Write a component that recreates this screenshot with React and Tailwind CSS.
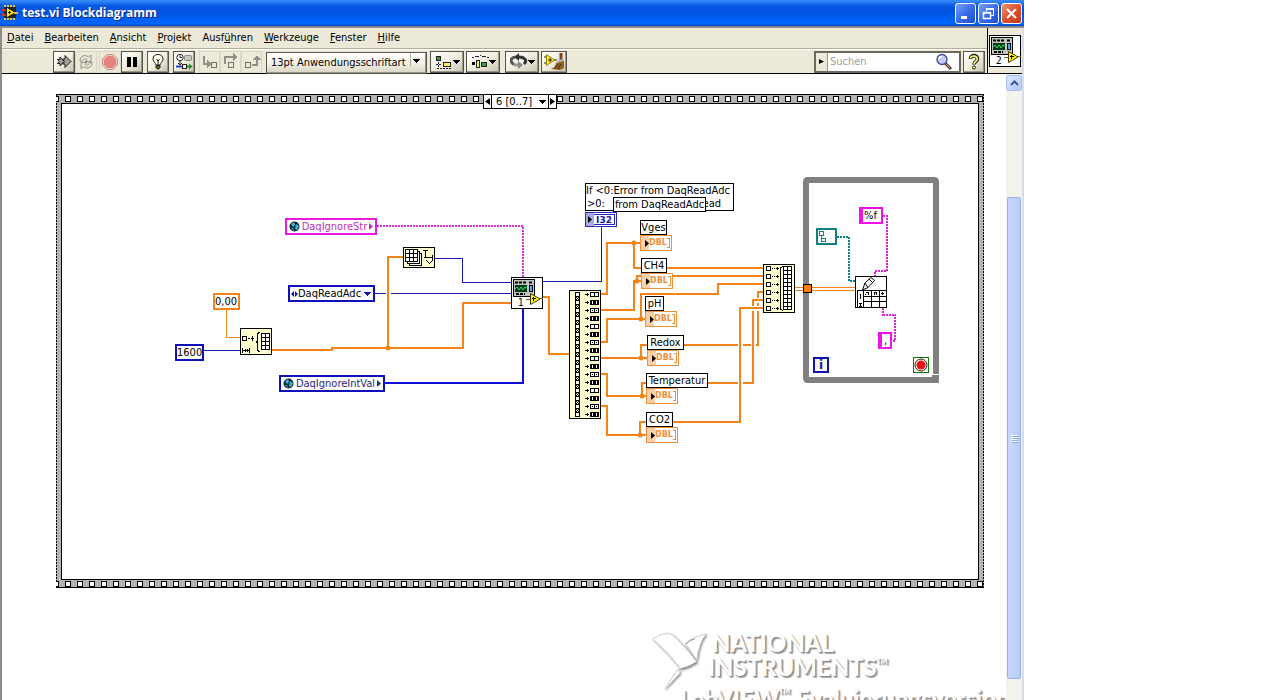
import { useState } from "react";
import { clsx } from "clsx";

const MENUS = [
  ["", "D", "atei"],
  ["", "B", "earbeiten"],
  ["", "A", "nsicht"],
  ["", "P", "rojekt"],
  ["Ausf", "ü", "hren"],
  ["", "W", "erkzeuge"],
  ["", "F", "enster"],
  ["", "H", "ilfe"],
];

// Wires of the channel outputs. Later ones bridge over earlier ones.
const CHANNEL_WIRES = [
  "M601 294H607V243H640M634 243V268H763",
  "M601 310H634V281H641M637 281V276H763",
  "M601 342H607V319H645M641 319V294H718V284H763",
  "M601 358H647M641 358V345H758V292H763",
  "M601 374H607V396H646M642 396V383H753V300H763",
  "M601 406H607V435H646M640 435V422H740V308H763",
];

const JUNCTIONS = [
  [388, 348],
  [634, 243],
  [637, 281],
  [641, 319],
  [641, 358],
  [642, 396],
  [640, 435],
];

const CHANNELS = [
  { name: "Vges", label: "left-[638px] top-[146px] w-[27px]", terminal: "left-[638px] top-[161px]" },
  { name: "CH4", label: "left-[639px] top-[184px] w-[26px]", terminal: "left-[639px] top-[199px]" },
  { name: "pH", label: "left-[643px] top-[222px] w-[19px]", terminal: "left-[643px] top-[237px]" },
  { name: "Redox", label: "left-[645px] top-[261px] w-[37px]", terminal: "left-[645px] top-[276px]" },
  { name: "Temperatur", label: "left-[644px] top-[299px] w-[62px]", terminal: "left-[644px] top-[314px]" },
  { name: "CO2", label: "left-[644px] top-[338px] w-[27px]", terminal: "left-[644px] top-[353px]" },
];

function Arrow({ className }) {
  return (
    <svg className={clsx("pointer-events-none shrink-0", className)} width="7" height="4" viewBox="0 0 7 4" shapeRendering="crispEdges">
      <path d="M0 0H7L3.5 4Z" fill="currentColor" />
    </svg>
  );
}

/* Title bar */

function AppIcon() {
  return (
    <svg width="16" height="16" viewBox="0 0 16 16">
      <path d="M2 1H14M2 14H14" stroke="#e8c840" strokeWidth="2" strokeDasharray="2 1" />
      <rect x="2" y="2" width="12" height="11" fill="#222" />
      <path d="M0 5H4M0 10H4" stroke="#e03030" strokeWidth="2" />
      <path d="M12 8H16" stroke="#e8b020" strokeWidth="2" />
      <path d="M5 3V12L12.500 7.500Z" fill="#ffe820" />
      <path d="M6 7.500H9M7.500 6V9" stroke="#222" />
    </svg>
  );
}

function WindowButton({ label, red, children }) {
  return (
    <button
      type="button"
      aria-label={label}
      className={clsx(
        "flex h-[21px] w-[21px] items-center justify-center rounded-[3px] border border-white bg-gradient-to-br",
        red ? "from-[#f0906c] via-[#e0502c] to-[#c03c14]" : "from-[#7aa0f4] via-[#3a6cec] to-[#1c4cd4]"
      )}
    >
      <svg width="15" height="15" viewBox="0 0 15 15" fill="none" stroke="white">
        {children}
      </svg>
    </button>
  );
}

function TitleBar() {
  return (
    <header className="flex h-7 shrink-0 items-center gap-1 border-b-2 border-[#8c8c88] bg-[linear-gradient(180deg,#3a8cf8_0%,#2a80f4_8%,#0858e4_22%,#0054e0_50%,#0062fa_78%,#0066ff_92%,#0040c0_100%)] px-[2px]">
      <AppIcon />
      <h1 className="flex-1 font-['Open_Sans',sans-serif] text-[12px] font-bold text-white [text-shadow:1px_1px_0_#0a2a80]">
        test.vi Blockdiagramm
      </h1>
      <div className="flex gap-[2px]">
        <WindowButton label="Minimieren">
          <path d="M3 11.500H9" strokeWidth="3" />
        </WindowButton>
        <WindowButton label="Wiederherstellen">
          <path d="M5.500 5V3H12.500V9.500H10" strokeWidth="1" />
          <path d="M5 3H13" strokeWidth="2" />
          <path d="M2.500 6.500H9.500V12.500H2.500ZM2 7H10" strokeWidth="1.500" />
        </WindowButton>
        <WindowButton label="Schließen" red>
          <path d="M3 3L12 12M12 3L3 12" strokeWidth="2.200" />
        </WindowButton>
      </div>
    </header>
  );
}

/* Menu bar and toolbar */

function ToolButton({ label, flat, width = "w-[22px]", children }) {
  return (
    <button
      type="button"
      aria-label={label}
      className={clsx(
        "flex h-[22px] items-center justify-center border",
        width,
        flat
          ? "border-[#cfccbd] bg-[#ece9d8] opacity-60"
          : "border-[#55554c] bg-gradient-to-br from-white via-[#f0eee0] to-[#c8c4b0] shadow-[inset_-1px_-1px_0_#98958a]"
      )}
    >
      {children}
    </button>
  );
}

function Icon({ children }) {
  return (
    <svg width="18" height="18" viewBox="0 0 18 18" fill="none" stroke="#222" shapeRendering="crispEdges">
      {children}
    </svg>
  );
}

function Toolbar() {
  const [font, setFont] = useState("13pt Anwendungsschriftart");
  const [query, setQuery] = useState("");

  return (
    <div className="flex h-6 items-center border-t border-[#fffef6] pr-[2px] pl-[51px]">
      <div className="flex">
        <ToolButton label="Ausführen">
          <svg width="18" height="18" viewBox="0 0 18 18" fill="#a0a098" stroke="#222">
            <path d="M2.500 6.500H5V4L9 8.500L5 13V10.500H2.500L4 8.500Z" />
            <path d="M7.500 6H10V2.500L16 8.500L10 14.500V11H7.500L9.500 8.500Z" />
          </svg>
        </ToolButton>
        <ToolButton label="Wiederholt ausführen" flat>
          <svg width="18" height="18" viewBox="0 0 18 18" fill="#ece9d8" stroke="#555">
            <path d="M3 8C3 3 8 1 11.500 4L14 2V8.500H8L10 6.500C8 5 6 6 5.500 8Z" />
            <path d="M15 9.500C15 14.500 10 16.500 6.500 13.500L4 15.500V9.500H10L8 11.500C10 13 12 12 12.500 9.500Z" />
          </svg>
        </ToolButton>
      </div>
      <div className="ml-[2px] flex">
        <ToolButton label="Abbrechen" flat>
          <svg width="18" height="18" viewBox="0 0 18 18">
            <path d="M6 1.500H12L16.500 6V12L12 16.500H6L1.500 12V6Z" fill="#f0c0b8" stroke="#a05048" />
            <path d="M6.500 3H11.500L15 6.500V11.500L11.500 15H6.500L3 11.500V6.500Z" fill="#e04040" />
          </svg>
        </ToolButton>
        <ToolButton label="Pause">
          <Icon>
            <path d="M6 4V14M12 4V14" strokeWidth="4" stroke="black" />
          </Icon>
        </ToolButton>
      </div>
      <div className="ml-1 flex gap-1">
        <ToolButton label="Highlight-Funktion">
          <svg width="18" height="18" viewBox="0 0 18 18" fill="#fffff0" stroke="#222">
            <path d="M7 12C7 10 4 9 4 6C4 3 6 1.500 9 1.500S14 3 14 6C14 9 11 10 11 12Z" />
            <path d="M7.500 6L9 8L10.500 6M9 8V12" />
            <path d="M7 12.500H11V15H10L9 16.500L8 15H7Z" fill="#806010" />
          </svg>
        </ToolButton>
        <ToolButton label="Verbindungswerte speichern">
          <svg width="18" height="18" viewBox="0 0 18 18" fill="none" stroke="#222">
            <circle cx="5" cy="4.500" r="3.200" fill="white" />
            <path d="M5 2.500V4.500H7M5 8V12M3 10L5 12L7 10" />
            <rect x="9.500" y="2.500" width="7" height="5" rx="1" fill="#c8c8c0" stroke="#888" />
            <path d="M1 13.500H7" stroke="#2040c0" strokeWidth="2" />
            <rect x="7.500" y="11.500" width="4" height="4" fill="white" />
            <path d="M12 13.500H14" stroke="#209020" strokeWidth="2" />
            <path d="M14 10.500V16.500L17.500 13.500Z" fill="#209020" stroke="none" />
          </svg>
        </ToolButton>
      </div>
      <div className="ml-1 flex">
        <ToolButton label="Hineinspringen" flat width="w-[21px]">
          <Icon>
            <path d="M3 3V11H8" strokeWidth="2" stroke="#555" />
            <path d="M6 7V15L10 11Z" fill="#555" stroke="none" />
            <rect x="10.500" y="9.500" width="5" height="5" />
          </Icon>
        </ToolButton>
        <ToolButton label="Überspringen" flat width="w-[21px]">
          <Icon>
            <path d="M3 11V4H12" strokeWidth="2" stroke="#555" />
            <path d="M11 0V8L15 4Z" fill="#555" stroke="none" />
            <rect x="6.500" y="9.500" width="5" height="5" />
          </Icon>
        </ToolButton>
        <ToolButton label="Hinausspringen" flat width="w-[21px]">
          <Icon>
            <rect x="2.500" y="9.500" width="5" height="5" />
            <path d="M9 12H14V6" strokeWidth="2" stroke="#555" />
            <path d="M10 7H18L14 2Z" fill="#555" stroke="none" />
          </Icon>
        </ToolButton>
      </div>
      <div className="relative ml-1">
        <select
          aria-label="Schriftart"
          value={font}
          onChange={(e) => setFont(e.target.value)}
          className="h-[22px] w-[161px] appearance-none border border-[#55554c] bg-gradient-to-b from-white via-[#f4f2e8] to-[#d8d4c4] px-1 text-[11px] leading-4 text-black shadow-[inset_-1px_-1px_0_#98958a]"
        >
          <option>13pt Anwendungsschriftart</option>
          <option>13pt Systemschriftart</option>
        </select>
        <span className="pointer-events-none absolute top-1 right-4 h-3.5 w-px bg-[#b8b4a4]" />
        <Arrow className="absolute top-[10px] right-[7px]" />
      </div>
      <div className="ml-[3px] flex gap-[2px]">
        <ToolButton label="Objekte ausrichten" width="w-[34px]">
          <Icon>
            <rect x="1.500" y="3.500" width="4" height="4" fill="#30a040" />
            <path d="M3.500 9V14M1 11.500H6M2 15.500H16" strokeDasharray="2 1" />
            <rect x="8.500" y="9.500" width="7" height="4" fill="#fff060" />
          </Icon>
          <Arrow />
        </ToolButton>
        <ToolButton label="Objekte einteilen" width="w-[34px]">
          <Icon>
            <path d="M1 4.500H3M4 3.500H8M9 2.500H10M11 3.500H15M16 4.500H18" />
            <rect x="1" y="9" width="3" height="3" fill="black" stroke="none" />
            <rect x="5.500" y="7.500" width="3" height="7" fill="#fff060" />
            <rect x="10.500" y="9.500" width="5" height="4" fill="#30a040" />
          </Icon>
          <Arrow />
        </ToolButton>
      </div>
      <div className="ml-[5px] flex gap-[2px]">
        <ToolButton label="Neu ordnen" width="w-[34px]">
          <svg width="18" height="18" viewBox="0 0 18 18" fill="none" strokeWidth="3">
            <path d="M14 11C18 7 14 4 9 4" stroke="#333" />
            <path d="M9 0V8L4 4Z" fill="#333" />
            <path d="M5 4C0 5 0 9 4 11.500" stroke="#555" />
            <path d="M4 12H9" stroke="#999" />
            <path d="M8 8V16L13 12Z" fill="#888" />
          </svg>
          <Arrow />
        </ToolButton>
        <ToolButton label="Diagramm aufräumen" width="w-[26px]">
          <svg width="22" height="18" viewBox="0 0 22 18">
            <path d="M1 4H4M1 10H4M10 7H14" stroke="#222" />
            <path d="M3.500 1.500V12.500L11.500 7Z" fill="#fff040" stroke="#a08000" />
            <path d="M5 7H9M7 5V9" stroke="#222" />
            <path d="M18 0V8" stroke="#804020" strokeWidth="3" />
            <path d="M15 7L20 6L21 9L14 11Z" fill="#b0b0b0" />
            <path d="M13 10L21 8V15L17 17L8 16C11 15 13 13 13 10Z" fill="#906020" />
            <path d="M12 15L15 11M15 16L18 11" stroke="#402810" />
          </svg>
        </ToolButton>
      </div>
      <div className="ml-auto flex h-[22px] items-center border-2 border-[#6c6a60] bg-white">
        <button
          type="button"
          aria-label="Suchoptionen"
          className="flex h-full w-3 items-center justify-center border-r border-[#98958a] bg-[#ece9d8]"
        >
          <svg width="5" height="5" viewBox="0 0 5 5">
            <path d="M0 0L5 2.500L0 5Z" />
          </svg>
        </button>
        <input
          type="search"
          aria-label="Suchen"
          placeholder="Suchen"
          value={query}
          onChange={(e) => setQuery(e.target.value)}
          className="w-[107px] px-[2px] text-[11px] leading-4 outline-none placeholder:text-[#a0a0a0]"
        />
        <svg className="mr-1.5" width="18" height="18" viewBox="0 0 18 18">
          <path d="M10 10L16 16" stroke="#604030" strokeWidth="3" />
          <path d="M10 10L15 15" stroke="#d8a070" strokeWidth="1" />
          <circle cx="7" cy="6.500" r="5" fill="#c8ccf8" stroke="#404890" strokeWidth="1.300" />
          <path d="M4 6C4 4.500 5 3.500 7 3.500" stroke="white" strokeWidth="1.500" fill="none" />
        </svg>
      </div>
      <div className="ml-[2px]">
        <ToolButton label="Kontexthilfe">
          <svg width="14" height="18" viewBox="0 0 14 18" fill="none">
            <path d="M3.500 6C3.500 1.500 10.500 1.500 10.500 6C10.500 8.500 7 8.500 7 11.500" stroke="#222" strokeWidth="3.600" />
            <path d="M3.500 5.500C4 2 10 2 10.300 6C10.300 8.500 7 8.500 7 11" stroke="#fff880" strokeWidth="1.600" />
            <circle cx="7" cy="14.500" r="1.500" fill="#fff880" stroke="#222" />
          </svg>
        </ToolButton>
      </div>
    </div>
  );
}

/* 32x32 icon of a VI, used for the window and for the sub VI node */
function ViIcon({ number }) {
  return (
    <svg width="32" height="32" viewBox="0 0 32 32">
      <rect x="0.500" y="0.500" width="31" height="31" fill="white" stroke="black" />
      <rect x="2.500" y="2.500" width="21" height="17" fill="#c0c4c0" stroke="black" />
      <path d="M4 5.500H7M8 5.500H11M12 5.500H15M18 5.500H21M5 17H8M9 17H12M13 17H14" stroke="black" strokeWidth="2" />
      <rect x="4" y="8" width="12" height="7" fill="#003818" />
      <path d="M4 12L6 10L8 13L10 10L12 13L14 10L16 11" stroke="#30e070" fill="none" />
      <rect x="18.500" y="8.500" width="3" height="6" fill="#40b0f0" stroke="black" />
      <path d="M15 22.500H19M28 21.500H32" stroke="#806020" />
      <path d="M19.500 16.500V27.500L29 22Z" fill="#fff020" stroke="#403800" />
      <path d="M21 21.500H25M22.500 20V24" stroke="black" />
      <text x="7" y="29" className="fill-black text-[10px]">
        {number}
      </text>
    </svg>
  );
}

/* Diagram nodes */

function ConstantBox({ label, value, className }) {
  return (
    <input
      aria-label={label}
      defaultValue={value}
      className={clsx("absolute h-[17px] border-2 bg-white text-[11px] leading-3 outline-none", className)}
    />
  );
}

function GlobalVariable({ name, className }) {
  return (
    <div className={clsx("absolute flex h-[17px] items-center justify-center gap-[2px] border-2 bg-white", className)}>
      <svg width="11" height="11" viewBox="0 0 11 11">
        <circle cx="5.500" cy="5.500" r="5" fill="#102838" />
        <path d="M2 3L5 1L6 4L4 6ZM7 3L10 5L8 9L6 8ZM2 7L4 7L5 10Z" fill="#38b8d8" />
      </svg>
      <span>{name}</span>
      <svg width="4" height="7" viewBox="0 0 4 7">
        <path d="M0 0L4 3.500L0 7Z" fill="currentColor" />
      </svg>
    </div>
  );
}

function Label({ className, children }) {
  return (
    <div className={clsx("absolute flex h-[15px] items-center justify-center border border-black bg-white whitespace-nowrap", className)}>
      {children}
    </div>
  );
}

function DblTerminal({ className }) {
  return (
    <div className={clsx("absolute flex h-4 w-8 items-center border border-[#f09038] bg-white font-['DejaVu_Sans',sans-serif] text-[8px] leading-[14px] font-bold text-[#f09038]", className)}>
      <span className="flex h-full w-2 items-center justify-end bg-[#fbd0a8]">
        <svg width="4" height="7" viewBox="0 0 4 7">
          <path d="M0 0L4 3.500L0 7Z" />
        </svg>
      </span>
      <span>DBL</span>
      <svg className="ml-auto shrink-0" width="4" height="10" viewBox="0 0 4 10" shapeRendering="crispEdges">
        <path d="M0 0.500H2.500V9.500H0" fill="none" stroke="#f09038" />
      </svg>
    </div>
  );
}

function SequenceFrame() {
  return (
    <g shapeRendering="crispEdges">
      <rect x="56" y="94" width="928" height="494" fill="#b4b4b4" />
      <rect x="61.500" y="103.500" width="917" height="476" fill="white" stroke="black" />
      <path d="M56 94.500H984M56 587.500H984" stroke="black" />
      <path d="M56.500 94V588M983.500 94V588" stroke="black" strokeDasharray="2 1" />
      <path d="M56 96.500H58.500V101.500H56M56 581.500H58.500V586.500H56" fill="white" stroke="black" />
      {Array.from({ length: 77 }, (_, i) => (
        <g key={i} fill="white" stroke="black">
          <rect x={65.5 + i * 12} y="96.500" width="5" height="5" />
          <rect x={65.5 + i * 12} y="581.500" width="5" height="5" />
        </g>
      ))}
    </g>
  );
}

function ArrayNodes() {
  return (
    <g shapeRendering="crispEdges" fill="none" stroke="black">
      {/* Array size */}
      <rect x="403.500" y="247.500" width="31" height="20" fill="#ffffd0" />
      <path d="M409.500 253.500H421.500V265.500H409.500Z" fill="white" />
      <path d="M407.500 251.500H419.500V263.500H407.500Z" fill="white" />
      <path d="M405.500 249.500H417.500V261.500H405.500ZM405 253.500H418M405 257.500H418M409.500 249V262M413.500 249V262" fill="white" />
      <path d="M423 250.500H428M425.500 250V258M424 257.500H432M432.500 255V260M426 260L430 264M429 264L433 260" />
      {/* Initialize array */}
      <rect x="240.500" y="328.500" width="31" height="26" fill="#ffffd0" />
      <rect x="242.500" y="336.500" width="4" height="4" />
      <path d="M248 338.500H250M251 338.500H254M252.500 336V341M242.500 348V353M249.500 348V353M243 350.500H249M245.500 349V352M247 349V352" />
      <path d="M259.500 332L257.500 334V341L256.500 342L257.500 343V350L259.500 352" />
      <path d="M261.500 333.500H269.500V349.500H261.500ZM265.500 333V350M261 337.500H270M261 341.500H270M261 345.500H270" fill="white" />
      {/* Index array */}
      <rect x="569.500" y="290.500" width="31" height="128" fill="#ffffd0" />
      {Array.from({ length: 16 }, (_, i) => (
        <g key={i} transform={`translate(0 ${i * 8})`}>
          <rect x="575.500" y="292.500" width="4" height="4" fill="white" />
          {i < 15 && <path d="M576 297.500H577M578 297.500H579M577 298.500H578M576 299.500H577M578 299.500H579M575.500 297V300M579.500 297V300" />}
          <path d="M585 294.500H589M587.500 293V296" />
          <path d="M590.500 292.500H598.500V296.500H590.500ZM594.500 292V297" fill="white" />
          {i % 2 === 1 && <path d="M591 294.500H598" strokeWidth="3" strokeDasharray="1 1" />}
          {i % 4 === 2 && <path d="M592 294.500H593M596 294.500H597" />}
        </g>
      ))}
      {/* Build array */}
      <rect x="763.500" y="264.500" width="31" height="48" fill="#ffffd0" />
      <path d="M783 266.500L780.500 268V309L783 310.500" />
      {Array.from({ length: 6 }, (_, i) => (
        <g key={i} transform={`translate(0 ${i * 8})`}>
          <rect x="766.500" y="266.500" width="4" height="4" fill="white" />
          <path d="M772 268.500H773M774 268.500H775M776 268.500H779M777.500 267V270" />
        </g>
      ))}
      <rect x="783.500" y="266.500" width="8" height="43" fill="white" />
      <path d="M787.500 266V310M783 270.500H792M783 274.500H792M783 278.500H792M783 282.500H792M783 286.500H792M783 290.500H792M783 294.500H792M783 298.500H792M783 302.500H792M783 306.500H792" />
    </g>
  );
}

function WhileLoop() {
  return (
    <g>
      <path d="M936 374V182Q936 180 934 180H808Q806 180 806 182V378Q806 380 808 380H939" fill="none" stroke="#808080" strokeWidth="6" />
      <path d="M932 375H939V382H936V377H932Z" fill="#808080" />
      <rect x="795" y="287" width="60" height="1" fill="#f48418" />
      <rect x="795" y="290" width="60" height="1" fill="#f48418" />
      <g fill="none" shapeRendering="crispEdges">
        <path d="M837 236.500H849V280.500H855" stroke="#108080" strokeWidth="2" strokeDasharray="2 1" />
        <path d="M883 215.500H887V270.500H875V276M883 308V314.500H895V340.500H891" stroke="#e020d8" strokeWidth="2" strokeDasharray="2 1" />
        <rect x="803.500" y="284.500" width="8" height="8" fill="#ff8000" stroke="black" />
        {/* Cluster constant */}
        <rect x="817" y="229" width="19" height="15" fill="white" stroke="#108080" strokeWidth="2" />
        <path d="M819.500 231.500H823.500V235.500H819.500ZM821.500 236V238H824M821.500 238.500H825.500V241.500H821.500Z" stroke="#108080" />
      </g>
      {/* Write to spreadsheet */}
      <g fill="none" stroke="black" shapeRendering="crispEdges">
        <rect x="855.500" y="276.500" width="31" height="31" fill="white" />
        <path d="M857 290.500H886M863 296.500H886M863 301.500H886M857.500 290V308M863.500 290V308M871.500 290V308M879.500 290V308" />
        <path d="M865 294.500H866M866 292.500H869M868.500 292V295M874 292.500H877M874.500 292V295M876.500 292V295M881 293.500H884M882.500 292V295M860.500 294V299M859 303.500H862M859 306.500H862M860.500 303V307" />
      </g>
      <path d="M862.500 290L865 283L871 277.500L874.500 280.500L868 287.500ZM865 283L868 287.500M869 279L873 283" fill="white" stroke="black" />
      {/* Stop condition */}
      <rect x="913.500" y="357.500" width="15" height="15" fill="#ffffe8" stroke="#187018" />
      <circle cx="921" cy="365" r="6" fill="white" stroke="#222" />
      <circle cx="921" cy="365" r="4.500" fill="#f01010" />
    </g>
  );
}

function Wires() {
  return (
    <g fill="none" shapeRendering="crispEdges">
      <path d="M435 258.500H462.500V282.500H511M375 293.500H511M204 350.500H240M543 281.500H601.500V226" stroke="#1818a8" />
      <path d="M385 383H523V309" stroke="#1010d8" strokeWidth="2" />
      <path d="M377 226H523V277" stroke="#e030d8" strokeWidth="2" strokeDasharray="2 1" />
      <path d="M226.500 310V337.500H240" stroke="#f08820" />
      <path d="M388 346V259" stroke="white" strokeWidth="5" />
      <path d="M272 350H332V348H463V303H511M388 348V257H403M543 297H549V354H569" stroke="#f48418" strokeWidth="2" />
      {CHANNEL_WIRES.map((d) => (
        <g key={d}>
          <path d={d} stroke="white" strokeWidth="5" />
          <path d={d} stroke="#f48418" strokeWidth="2" />
        </g>
      ))}
      {JUNCTIONS.map(([x, y]) => (
        <circle key={`${x}-${y}`} cx={x} cy={y} r="2.500" fill="#f48418" shapeRendering="auto" />
      ))}
    </g>
  );
}

function Watermark() {
  return (
    <div className="absolute top-[557px] left-[650px] font-['Lato',sans-serif] font-bold whitespace-nowrap text-white [text-shadow:1px_1px_1px_#888,2px_2px_1px_#aaa]">
      <div className="flex">
        <svg className="drop-shadow-[1px_1px_1px_#888]" width="56" height="60" viewBox="0 0 60 60" preserveAspectRatio="none" fill="white" stroke="#d0d0d0">
          <path d="M1 8Q14 0 22 4Q34 14 48 31Q40 36 31 38Q18 22 1 8Z" />
          <path d="M36 13Q42 6 58 3Q50 12 48 29Q42 20 36 13ZM28 38L30 42L14 58Q20 48 28 38Z" />
          <path d="M48 31Q40 36 31 38M36 13Q42 8 46 8" fill="none" stroke="#888" />
        </svg>
        <div className="text-[24px] leading-6">
          <p className="pl-1">NATIONAL</p>
          <p className="flex items-start">
            INSTRUMENTS
            <span className="text-[7px] leading-3">TM</span>
          </p>
        </div>
      </div>
      <p className="-mt-2 flex items-start pl-7 text-[24px] leading-8">
        LabVIEW
        <span className="pr-1.5 text-[7px] leading-4">TM</span>
        Evaluierungsversion
      </p>
    </div>
  );
}

function Diagram() {
  const [method, setMethod] = useState("DaqReadAdc");

  return (
    <main className="relative min-w-0 flex-1 overflow-hidden bg-white text-[11px] leading-3">
      <Watermark />
      <svg className="absolute top-0 left-0" width="1002" height="626" viewBox="2 74 1002 626">
        <SequenceFrame />
        <Wires />
        <ArrayNodes />
        <WhileLoop />
      </svg>

      {/* Frame selector */}
      <div className="absolute top-5 left-[481px] flex h-[15px] w-[74px] items-center border border-black bg-white">
        <button type="button" aria-label="Vorheriger Rahmen" className="flex h-full w-2 items-center justify-center border-r border-black">
          <svg width="5" height="7" viewBox="0 0 5 7">
            <path d="M5 0V7L0 3.500Z" />
          </svg>
        </button>
        <select aria-label="Rahmen" className="min-w-0 flex-1 appearance-none px-1 leading-3">
          <option>6 [0..7]</option>
        </select>
        <Arrow className="mr-[2px] -ml-2" />
        <button type="button" aria-label="Nächster Rahmen" className="flex h-full w-2 items-center justify-center border-l border-black">
          <svg width="5" height="7" viewBox="0 0 5 7">
            <path d="M0 0V7L5 3.500Z" />
          </svg>
        </button>
      </div>

      <GlobalVariable name="DaqIgnoreStr" className="top-[144px] left-[283px] w-[92px] border-[#e818e0] text-[#c030b8]" />
      <GlobalVariable name="DaqIgnoreIntVal" className="top-[301px] left-[277px] w-[106px] border-[#1010b8] text-[#282880]" />

      <div className="absolute top-[211px] left-[286px] flex h-[17px] w-[87px] items-center border-2 border-[#1010b8] bg-white">
        <svg className="ml-px" width="7" height="6" viewBox="0 0 7 6" fill="#1010b8">
          <path d="M3 0V6L0 3ZM4 0V6L7 3Z" />
        </svg>
        <select
          aria-label="Methode"
          value={method}
          onChange={(e) => setMethod(e.target.value)}
          className="min-w-0 flex-1 appearance-none leading-3"
        >
          <option>DaqReadAdc</option>
          <option>DaqIgnoreStr</option>
        </select>
        <Arrow className="mr-[2px] text-[#1010b8]" />
      </div>

      <ConstantBox label="Initialwert" value="0,00" className="top-[219px] left-[211px] w-[27px] border-[#f48418]" />
      <ConstantBox label="Anzahl" value="1600" className="top-[270px] left-[173px] w-[29px] border-[#1010b8]" />
      <ConstantBox label="Format" value="%f" className="top-[133px] left-[857px] w-6 border-l-4 border-[#f010e8] pl-px" />
      <ConstantBox label="Trennzeichen" value="," className="top-[258px] left-[876px] w-[14px] border-l-4 border-[#f010e8] pl-[2px]" />

      <div className="absolute top-[203px] left-[509px]">
        <ViIcon number="1" />
      </div>

      {/* Error label with the second label lying over it */}
      <div className="absolute top-[109px] left-[583px] flex h-7 w-[149px] flex-col justify-between border border-black bg-white whitespace-nowrap">
        <span className="leading-[14px]">If &lt;0:Error from DaqReadAdc</span>
        <span className="flex justify-between pr-3 pl-px">
          <span>&gt;0:</span>
          <span>ead</span>
        </span>
      </div>
      <Label className="top-[123px] left-[611px] w-[93px]">from DaqReadAdc</Label>

      <div className="absolute top-[138px] left-[583px] flex h-[15px] w-8 items-center border border-[#2828c0] bg-white font-['DejaVu_Sans',sans-serif] text-[9px] font-bold text-[#1818a8]">
        <span className="flex h-full w-2 items-center justify-center bg-[#a8a8e8]">
          <svg width="4" height="7" viewBox="0 0 4 7">
            <path d="M0 0L4 3.500L0 7Z" />
          </svg>
        </span>
        <span className="mr-px flex h-[11px] flex-1 items-center justify-center border border-l-0 border-[#2828c0]">I32</span>
      </div>

      {CHANNELS.map((channel) => (
        <div key={channel.name}>
          <Label className={channel.label}>{channel.name}</Label>
          <DblTerminal className={channel.terminal} />
        </div>
      ))}

      <div className="absolute top-[283px] left-[811px] flex h-4 w-4 items-center justify-center border-2 border-[#1010b8] bg-[#f8f8e8] font-['DejaVu_Sans',sans-serif] text-[12px] font-bold text-[#1010b8]">
        i
      </div>
    </main>
  );
}

function ScrollBar() {
  return (
    <div className="flex w-4 shrink-0 flex-col bg-[#f4f3ec] pt-px">
      <button
        type="button"
        aria-label="Nach oben"
        className="flex h-4 shrink-0 items-center justify-center rounded-[2px] border border-[#a8c0f0] bg-gradient-to-br from-[#dce8ff] to-[#b0c8f8]"
      >
        <svg width="9" height="6" viewBox="0 0 9 6" fill="none" stroke="#405890" strokeWidth="2">
          <path d="M1 5L4.500 1.500L8 5" />
        </svg>
      </button>
      <div className="grow-[108]" />
      <div className="mx-px flex grow-[481] flex-col items-center justify-center gap-px rounded-[2px] border border-[#98b0e8] bg-gradient-to-r from-[#c8d8ff] to-[#b8ccfc]">
        <span className="h-px w-1.5 bg-white shadow-[1px_1px_0_#8ca8e8]" />
        <span className="h-px w-1.5 bg-white shadow-[1px_1px_0_#8ca8e8]" />
        <span className="h-px w-1.5 bg-white shadow-[1px_1px_0_#8ca8e8]" />
        <span className="h-px w-1.5 bg-white shadow-[1px_1px_0_#8ca8e8]" />
      </div>
      <div className="grow-[21]" />
    </div>
  );
}

export default function App() {
  return (
    <div className="h-screen overflow-hidden bg-white">
      <div className="flex h-full w-4/5 flex-col font-['DejaVu_Sans_Condensed','DejaVu_Sans',sans-serif] text-black">
        <TitleBar />
        <div className="flex min-h-0 flex-1 flex-col border-r-2 border-l-2 border-r-[#d8dce4] border-l-[#8c8c88]">
          <div className="flex shrink-0 border-b border-black bg-[#ece9d8]">
            <div className="min-w-0 flex-1">
              <nav className="flex h-[21px] items-center gap-[11px] border-b border-[#b0ada0] pl-[5px] text-[11px] leading-4">
                {MENUS.map(([before, key, after]) => (
                  <button key={key} type="button">
                    {before}
                    <span className="underline">{key}</span>
                    {after}
                  </button>
                ))}
              </nav>
              <Toolbar />
            </div>
            <div className="flex items-center justify-center border-l border-black px-px">
              <ViIcon number="2" />
            </div>
          </div>
          <div className="flex min-h-0 flex-1">
            <Diagram />
            <ScrollBar />
          </div>
        </div>
      </div>
    </div>
  );
}
